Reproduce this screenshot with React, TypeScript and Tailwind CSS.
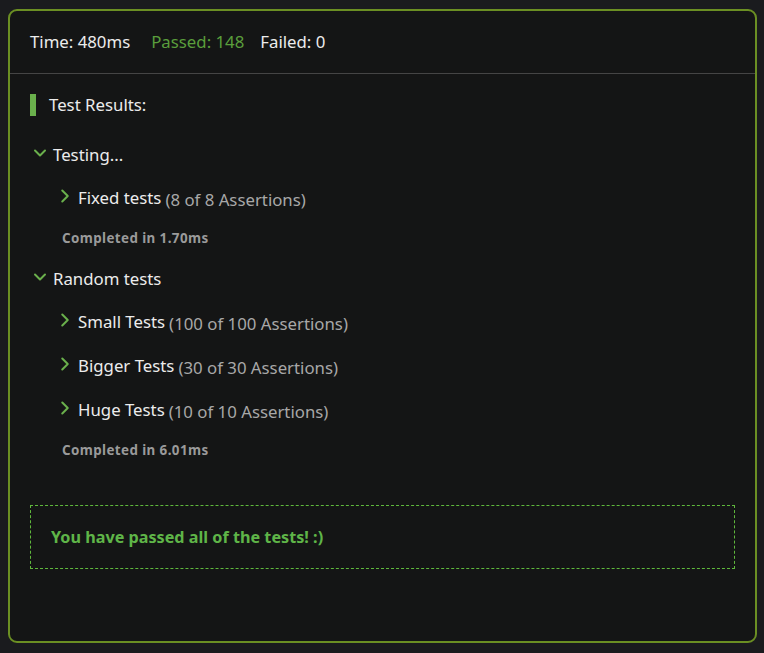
import { ChevronDown, ChevronRight } from "lucide-react";

type Item = { name: string; count: string };

const groups: { title: string; items: Item[]; time: string }[] = [
  {
    title: "Testing...",
    items: [{ name: "Fixed tests", count: "(8 of 8 Assertions)" }],
    time: "1.70ms",
  },
  {
    title: "Random tests",
    items: [
      { name: "Small Tests", count: "(100 of 100 Assertions)" },
      { name: "Bigger Tests", count: "(30 of 30 Assertions)" },
      { name: "Huge Tests", count: "(10 of 10 Assertions)" },
    ],
    time: "6.01ms",
  },
];

export default function App() {
  return (
    <div
      className="min-h-[653px] bg-[#1a1b1e] pt-[9px] pl-[8px] pr-[7px] pb-[10px]"
      style={{ fontFamily: "'Noto Sans', sans-serif" }}
    >
      <div className="h-[634px] rounded-[9px] border-2 border-[#6b8f23] bg-[#141515] text-[#ececec]">
        {/* header */}
        <div className="flex h-[63px] items-center border-b border-[#454545] px-5 text-[16.8px]">
          <span>Time: 480ms</span>
          <span className="ml-[21px] text-[#5a9e3c]">Passed: 148</span>
          <span className="ml-[16px]">Failed: 0</span>
        </div>

        <div className="px-5 pt-5">
          <div className="flex h-[22px] items-center gap-[13px]">
            <span className="h-[22px] w-[6px] bg-[#6ab04c]" />
            <span className="text-[16.8px]">Test Results:</span>
          </div>

          {groups.map((g, gi) => (
            <div key={g.title}>
              <div className={`flex h-[24px] items-center gap-[3px] ${gi === 0 ? "mt-[27px]" : "mt-[20px]"}`}>
                <ChevronDown size={20} strokeWidth={2.4} className="-mt-[4px] text-[#6ab04c]" />
                <span className="text-[16.8px]">{g.title}</span>
              </div>
              <div className="pl-[24px]">
                {g.items.map((it, i) => (
                  <div
                    key={it.name}
                    className={`flex h-[24px] items-center gap-[4px] ${i === 0 ? "mt-[19px]" : "mt-[20px]"}`}
                  >
                    <ChevronRight size={22} strokeWidth={2.2} className="-mt-[5px] text-[#6ab04c]" />
                    <span className="-ml-[2px] text-[16.8px]">{it.name}</span>
                    <span className="pt-[4px] text-[16.8px] text-[#a8a8a8]">{it.count}</span>
                  </div>
                ))}
                <div className="mt-[19px] flex h-[18px] items-center pl-[8px] text-[13.4px] font-bold tracking-[0.4px] text-[#9a9a9a]">
                  Completed in {g.time}
                </div>
              </div>
            </div>
          ))}

          <div className="mt-[46px] flex h-[64px] items-center border border-dashed border-[#5fb83c] px-5">
            <span className="text-[16.2px] font-bold text-[#5fb548]">You have passed all of the tests! :)</span>
          </div>
        </div>
      </div>
    </div>
  );
}
